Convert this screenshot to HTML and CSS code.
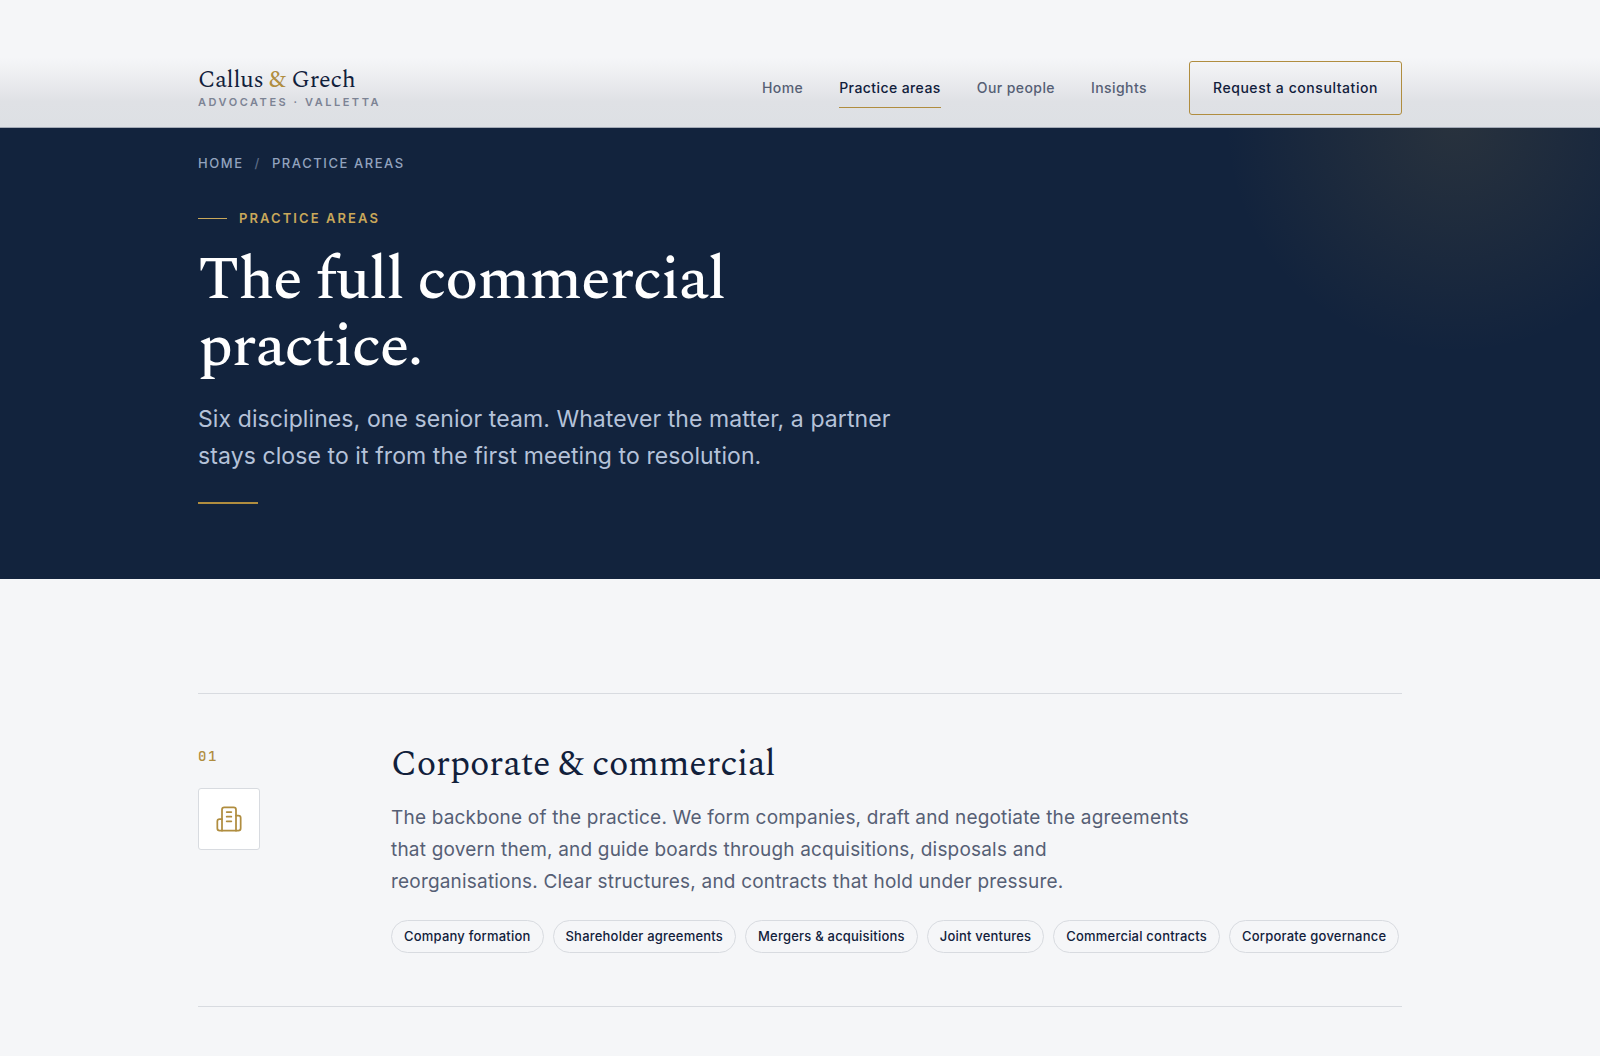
FILE: index.html
```html
<!DOCTYPE html>
<html lang="en">
<head>
  <meta charset="UTF-8" />
  <meta name="viewport" content="width=device-width, initial-scale=1.0"/>
  <title>Practice areas | Callus &amp; Grech</title>
  <link rel="stylesheet" href="styles.css">
</head>
<body>

  <header class="site-header">
    <div class="wrap header-row">
      <a class="brand" href="#">
        <span class="brand-name">Callus <span class="amp">&amp;</span> Grech</span>
        <span class="brand-sub">Advocates · Valletta</span>
      </a>
      <nav class="main-nav" aria-label="Main">
        <a href="#">Home</a>
        <a href="#" class="active" aria-current="page">Practice areas</a>
        <a href="#">Our people</a>
        <a href="#">Insights</a>
        <a href="#" class="btn">Request a consultation</a>
      </nav>
    </div>
  </header>

  <section class="hero">
    <div class="wrap">
      <nav class="crumbs" aria-label="Breadcrumb">
        <a href="#">Home</a>
        <span class="sep">/</span>
        <span>Practice areas</span>
      </nav>
      <p class="eyebrow">Practice areas</p>
      <h1>The full commercial practice.</h1>
      <p class="lead">Six disciplines, one senior team. Whatever the matter, a partner stays close to it from the first meeting to resolution.</p>
      <hr class="rule">
    </div>
  </section>

  <main class="wrap areas">
    <article class="area">
      <div class="area-side">
        <span class="num">01</span>
        <div class="icon-box">
          <svg viewBox="0 0 24 24" aria-hidden="true">
            <path d="M6 22V4a2 2 0 0 1 2-2h8a2 2 0 0 1 2 2v18Z"/>
            <path d="M6 12H4a2 2 0 0 0-2 2v6a2 2 0 0 0 2 2h2"/>
            <path d="M18 9h2a2 2 0 0 1 2 2v9a2 2 0 0 1-2 2h-2"/>
            <path d="M10 6h4M10 10h4M10 14h4"/>
          </svg>
        </div>
      </div>
      <div class="area-body">
        <h2>Corporate &amp; commercial</h2>
        <p>The backbone of the practice. We form companies, draft and negotiate the agreements that govern them, and guide boards through acquisitions, disposals and reorganisations. Clear structures, and contracts that hold under pressure.</p>
        <ul class="tags">
          <li>Company formation</li>
          <li>Shareholder agreements</li>
          <li>Mergers &amp; acquisitions</li>
          <li>Joint ventures</li>
          <li>Commercial contracts</li>
          <li>Corporate governance</li>
        </ul>
      </div>
    </article>
  </main>

</body>
</html>
```

FILE: styles.css
```css
:root {
  --navy: #12233d;
  --ink: #11203b;
  --gold: #b08d3f;
  --gold-light: #c9a85a;
  --bg: #f5f6f8;
  --line: #d8dbe0;
  --muted: #565f75;
  --serif: Spectral, "Liberation Serif", serif;
  --sans: Inter, sans-serif;
  --mono: "JetBrains Mono", "Liberation Mono", monospace;
}
* { box-sizing: border-box; }
body { margin: 0; background: var(--bg); color: var(--ink); font-family: var(--sans); }
a { color: inherit; text-decoration: none; }
h1, h2, p, ul { margin: 0; }
.wrap { max-width: 1300px; margin: 0 auto; padding: 0 48px; }

.site-header {
  position: sticky; top: 0; z-index: 10;
  padding-top: 48px;
  background: linear-gradient(var(--bg) 58px, #ebecef 80px, #dfe1e5 102px, #dde0e4);
  border-bottom: 1px solid #a4abb7;
}
.header-row { display: flex; align-items: center; justify-content: space-between; min-height: 79px; }
.brand { display: flex; flex-direction: column; gap: 1px; }
.brand-name { font-family: var(--serif); font-size: 24px; line-height: 28px; font-weight: 400; letter-spacing: -0.01em; }
.amp { color: var(--gold); }
.brand-sub { font-size: 11px; line-height: 14px; font-weight: 600; letter-spacing: 0.23em; text-transform: uppercase; color: #7c8394; }
.main-nav { display: flex; align-items: center; gap: 36px; font-size: 14px; line-height: 20px; font-weight: 500; letter-spacing: 0.03em; color: var(--muted); }
.main-nav a { padding: 9px 0; border: solid transparent; border-width: 1px 0; }
.main-nav .active { color: var(--ink); border-bottom-color: var(--gold); }
.main-nav .btn { margin-left: 6px; padding: 16px 23px; border: 1px solid var(--gold); border-radius: 3px; color: var(--ink); letter-spacing: 0.04em; }

.hero {
  padding: 27px 0 75px;
  background: radial-gradient(circle at calc(100% - 145px) -5px, rgba(176, 141, 63, 0.14), rgba(176, 141, 63, 0) 230px), var(--navy);
  color: #fff;
}
.crumbs { display: flex; gap: 11px; font-size: 13px; line-height: 16px; font-weight: 500; letter-spacing: 0.12em; text-transform: uppercase; color: #93a3bf; }
.crumbs .sep { color: #5c6b86; }
.eyebrow { display: flex; align-items: center; gap: 12px; margin-top: 39px; font-size: 13px; line-height: 16px; font-weight: 600; letter-spacing: 0.16em; text-transform: uppercase; color: var(--gold-light); }
.eyebrow::before { content: ""; width: 29px; height: 1px; background: var(--gold-light); }
h1 { max-width: 720px; margin-top: 20px; font-family: var(--serif); font-size: 61px; line-height: 67px; font-weight: 500; letter-spacing: -0.02em; }
.lead { max-width: 720px; margin-top: 21px; font-size: 23px; line-height: 37px; letter-spacing: 0.004em; color: #b5c2d9; }
.rule { width: 60px; height: 2px; margin: 27px 0 0; border: 0; background: var(--gold); }

.areas { padding-top: 114px; padding-bottom: 48px; }
.area { display: grid; grid-template-columns: 145px 1fr; gap: 48px; padding: 52px 0 53px; border-top: 1px solid var(--line); border-bottom: 1px solid var(--line); }
.num { display: block; font-family: var(--mono); font-size: 14px; line-height: 20px; font-weight: 500; letter-spacing: 0.12em; color: var(--gold); }
.icon-box { display: grid; place-items: center; width: 62px; height: 62px; margin-top: 22px; background: #fff; border: 1px solid var(--line); border-radius: 3px; }
.icon-box svg { width: 28px; height: 28px; fill: none; stroke: var(--gold); stroke-width: 1.5; stroke-linecap: round; stroke-linejoin: round; }
h2 { font-family: var(--serif); font-size: 36px; line-height: 38px; font-weight: 400; letter-spacing: -0.01em; }
.area-body p { max-width: 800px; margin-top: 18px; font-size: 19px; line-height: 32px; letter-spacing: 0.01em; color: var(--muted); }
.tags { display: flex; flex-wrap: wrap; gap: 9px; margin-top: 22px; padding: 0; list-style: none; }
.tags li { padding: 7px 12px; border: 1px solid var(--line); border-radius: 17px; font-size: 13px; line-height: 17px; font-weight: 500; letter-spacing: 0.016em; }
```
